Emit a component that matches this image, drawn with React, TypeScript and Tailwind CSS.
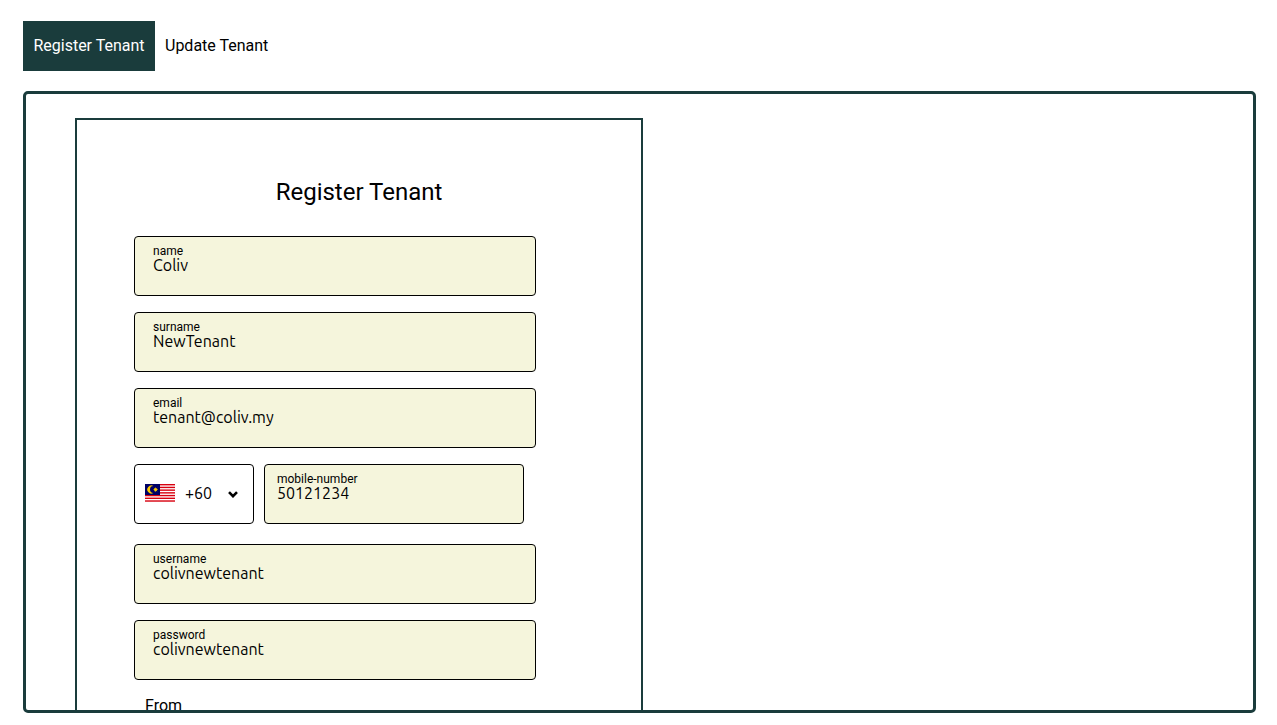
import React, { useState } from "react";

type FieldProps = {
  name: string;
  initial: string;
  type?: string;
  className?: string;
};

function Field({ name, initial, type = "text", className = "w-full pl-[18px]" }: FieldProps) {
  const [value, setValue] = useState(initial);
  return (
    <div className={`flex h-[60px] flex-col rounded border border-black bg-[#f5f5dc] pt-2 ${className}`}>
      <label htmlFor={name} className="text-xs leading-3">
        {name}
      </label>
      <input
        id={name}
        name={name}
        type={type}
        value={value}
        onChange={(e) => setValue(e.target.value)}
        className="h-9 w-full bg-transparent pb-5 font-[Ubuntu,'Noto_Sans',sans-serif] text-base leading-4 outline-none"
      />
    </div>
  );
}

function MalaysiaFlag() {
  return (
    <svg viewBox="0 0 30 19" className="h-[19px] w-[30px]" aria-hidden="true">
      <rect width="30" height="19" fill="#fff" />
      {[0, 1, 2, 3, 4, 5, 6].map((i) => (
        <rect key={i} y={i * 2.72} width="30" height="1.4" fill="#d8000f" />
      ))}
      <rect width="15" height="11" fill="#000066" />
      <path d="M8.4 2.1A4 4 0 1 0 8.4 8.9A3.3 3.3 0 1 1 8.4 2.1Z" fill="#fc0" />
      <path
        d="M10.6 3l.5 1.4 1.3-.7-.7 1.3 1.4.6-1.4.6.7 1.3-1.3-.7-.5 1.4-.5-1.4-1.3.7.7-1.3-1.4-.6 1.4-.6-.7-1.3 1.3.7z"
        fill="#fc0"
      />
    </svg>
  );
}

function CountryCode() {
  return (
    <div className="relative h-[60px] w-[120px] shrink-0">
      <select
        aria-label="Country code"
        className="h-full w-full appearance-none rounded border border-black bg-white pb-0.5 pl-[50px] font-[Ubuntu,'Noto_Sans',sans-serif] text-base outline-none"
      >
        <option>+60</option>
      </select>
      <span className="pointer-events-none absolute inset-0 flex items-center justify-between pr-4 pb-0.5 pl-[11px]">
        <MalaysiaFlag />
        <svg viewBox="0 0 10 7" className="mt-0.5 h-[7px] w-[10px]" fill="none" aria-hidden="true">
          <path d="M1 1.2L5 5.2L9 1.2" stroke="#000" strokeWidth="2.6" />
        </svg>
      </span>
    </div>
  );
}

function RegisterForm() {
  return (
    <form className="border-2 border-[#1a3c3c] px-[57px] pt-14 pb-14">
      <h1 className="text-center text-2xl">Register Tenant</h1>
      <div className="mt-7 flex max-w-[402px] flex-col gap-4">
        <Field name="name" initial="Coliv" />
        <Field name="surname" initial="NewTenant" />
        <Field name="email" initial="tenant@coliv.my" type="email" />
        <div className="mb-1 flex gap-[10px]">
          <CountryCode />
          <Field name="mobile-number" initial="50121234" type="tel" className="w-[260px] pl-3" />
        </div>
        <Field name="username" initial="colivnewtenant" />
        <Field name="password" initial="colivnewtenant" />
        <div className="-mt-0.5 flex flex-col gap-2 px-[11px]">
          <label htmlFor="from">From</label>
          <input id="from" type="date" className="h-10 rounded border border-black px-3" />
        </div>
      </div>
    </form>
  );
}

const tabs = ["Register Tenant", "Update Tenant"];

export default function App() {
  const [active, setActive] = useState(tabs[0]);
  return (
    <div className="flex h-screen flex-col gap-5 bg-white pt-[21px] pr-[21px] pb-3 pl-[23px] font-[Roboto,sans-serif] text-base text-black">
      <nav className="flex">
        {tabs.map((tab) => (
          <button
            key={tab}
            type="button"
            onClick={() => setActive(tab)}
            className={`h-[50px] cursor-pointer px-[10px] ${active === tab ? "min-w-[132px] bg-[#1a3c3c] text-white" : "text-black"}`}
          >
            {tab}
          </button>
        ))}
      </nav>
      <main className="min-h-0 flex-1 overflow-y-auto rounded-[5px] border-3 border-[#1a3c3c] pt-6 pr-[42px] pl-[49px] [scrollbar-width:none]">
        <div className="grid grid-cols-2">
          <RegisterForm />
        </div>
      </main>
    </div>
  );
}
